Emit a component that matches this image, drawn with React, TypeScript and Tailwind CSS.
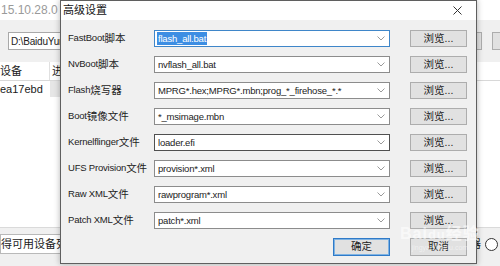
import React from "react";

const rows: { en: string; zh: string; value: string; focus?: boolean; dark?: boolean }[] = [
  { en: "FastBoot", zh: "脚本", value: "flash_all.bat", focus: true },
  { en: "NvBoot", zh: "脚本", value: "nvflash_all.bat" },
  { en: "Flash", zh: "烧写器", value: "MPRG*.hex;MPRG*.mbn;prog_*_firehose_*.*" },
  { en: "Boot", zh: "镜像文件", value: "*_msimage.mbn" },
  { en: "Kernelflinger", zh: "文件", value: "loader.efi", dark: true },
  { en: "UFS Provision", zh: "文件", value: "provision*.xml" },
  { en: "Raw XML", zh: "文件", value: "rawprogram*.xml" },
  { en: "Patch XML", zh: "文件", value: "patch*.xml" },
];

function Chevron() {
  return (
    <svg width="8" height="5" viewBox="0 0 8 5" className="shrink-0">
      <polyline points="0.5,0.5 4,4 7.5,0.5" fill="none" stroke="#9a9a9a" strokeWidth="1" />
    </svg>
  );
}

function Browse({ label = "浏览..." }: { label?: string }) {
  return (
    <div className="w-[57px] h-[17px] shrink-0 bg-[#e1e1e1] border border-[#adadad] flex items-center justify-center text-[10.5px] text-[#222] leading-none">
      {label}
    </div>
  );
}

export default function App() {
  return (
    <div className="relative w-[500px] h-[266px] overflow-hidden bg-white text-[#1a1a1a] font-[family-name:'Liberation_Sans','Noto_Sans_CJK_SC',sans-serif]">
      {/* Background application window */}
      <div className="flex flex-col w-full h-full">
        <div className="h-[20px] bg-white flex items-center pl-[1px] text-[12px] text-[#9a9a9a]">15.10.28.0</div>
        <div className="h-[42px] bg-[#f0f0f0] flex items-center justify-between pl-[8px]">
          <div className="w-[70px] h-[18px] bg-white border border-[#a9a9a9] flex items-center pl-[2px] text-[10px] tracking-[-0.2px] text-[#222]">D:\BaiduYun</div>
          <div className="flex gap-[10px] items-center">
            <div className="w-[8px] h-[18px] bg-[#e1e1e1] border border-[#adadad]" />
            <div className="w-[8px] h-[18px] bg-[#e1e1e1] border-y border-l border-[#adadad]" />
          </div>
        </div>
        <div className="h-[19px] bg-white border-b border-[#d8d8d8] flex items-center text-[11px]">
          <div className="w-[50px] border-r border-[#e0e0e0] h-full flex items-center">设备</div>
          <div className="pl-[2px]">进</div>
        </div>
        <div className="h-[16px] bg-white flex items-center text-[11px]">
          <div className="w-[50px]">ea17ebd</div>
          <div className="w-[10px] h-full bg-[#e6e6e6]" />
        </div>
        <div className="flex-1 bg-white" />
        <div className="h-[33px] bg-[#f0f0f0] border-t border-[#dadada] flex items-center justify-between">
          <div className="h-[20px] bg-white border border-[#b9b9b9] flex items-center pr-[2px] text-[11px]">得可用设备列表</div>
          <div className="flex items-center gap-[4px] pr-[2px] text-[11px]">
            <span>器</span>
            <div className="w-[13px] h-[13px] rounded-full border border-[#333] bg-white" />
          </div>
        </div>
        <div className="h-[6px] bg-[#f0f0f0]" />
      </div>

      {/* Dialog window */}
      <div className="absolute left-[60px] top-0 w-[417px] h-[264px] flex flex-col border border-[#5f5f5f] shadow-[0_0_6px_rgba(0,0,0,0.3)]">
        <div className="h-[19px] bg-white flex items-center justify-between pl-[2px] pr-[14px]">
          <span className="text-[11px] text-[#111]">高级设置</span>
          <svg width="9" height="9" viewBox="0 0 9 9">
            <path d="M0.5 0.5 L8.5 8.5 M8.5 0.5 L0.5 8.5" stroke="#333" strokeWidth="1" />
          </svg>
        </div>
        <div className="flex-1 bg-[#f0f0f0] flex flex-col pt-[10px] pl-[7px] pr-[9px]">
          <div className="flex flex-col gap-[9px]">
            {rows.map((r) => (
              <div key={r.en} className="flex items-center h-[17px]">
                <div className="w-[86px] shrink-0 flex items-center whitespace-nowrap text-[#222]">
                  <span className="text-[9.5px] tracking-[-0.2px]">{r.en}</span>
                  <span className="text-[10.5px]">{r.zh}</span>
                </div>
                <div
                  className={
                    "w-[236px] h-[17px] shrink-0 bg-white border flex items-center justify-between pl-[2px] pr-[4px] " +
                    (r.focus ? "border-[#3f86c9]" : r.dark ? "border-[#505050]" : "border-[#8c8c8c]")
                  }
                >
                  <span
                    className={
                      "text-[9.5px] tracking-[-0.2px] whitespace-nowrap leading-[13px] px-[1px] " +
                      (r.focus ? "bg-[#3d8ee3] text-white" : "text-[#222]")
                    }
                  >
                    {r.value}
                  </span>
                  <Chevron />
                </div>
                <div className="w-[20px] shrink-0" />
                <Browse />
              </div>
            ))}
          </div>
          <div className="flex justify-end gap-[20px] mt-[9px]">
            <div className="w-[57px] h-[18px] bg-[#e1e1e1] border border-[#2f7ac8] shadow-[inset_0_0_0_1px_#7fb3e3] flex items-center justify-center text-[10.5px] text-[#222]">
              确定
            </div>
            <div className="w-[57px] h-[18px] bg-[#e1e1e1] border border-[#adadad] flex items-center justify-center text-[10.5px] text-[#222]">
              取消
            </div>
          </div>
        </div>
      </div>

      {/* Watermark */}
      <div className="absolute left-[400px] top-[226px] flex flex-col items-center pointer-events-none">
        <span className="text-[16px] font-bold text-white/60 leading-none tracking-[1px]">Bai<span className="text-[13px]">du</span>经验</span>
        <span className="text-[7px] text-white/50 leading-none mt-[2px]">jingyan.baidu.com</span>
      </div>
    </div>
  );
}
